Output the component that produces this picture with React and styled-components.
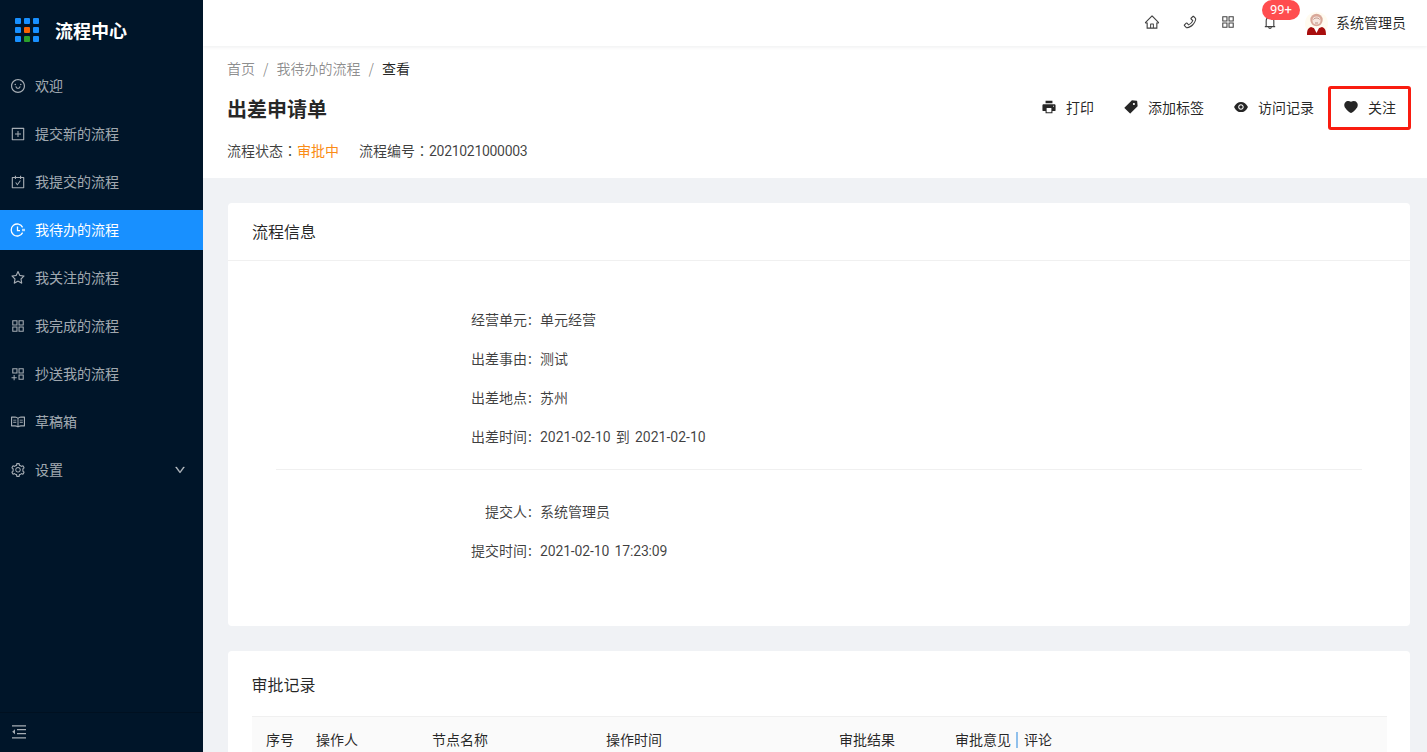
import React from "react";
import styled, { createGlobalStyle } from "styled-components";
import {
  AiOutlineSmile, AiOutlinePlusSquare, AiOutlineCarryOut, AiOutlineStar,
  AiOutlineAppstore, AiOutlineAppstoreAdd, AiOutlineRead, AiOutlineSetting, AiOutlineDown,
  AiOutlineHome, AiOutlinePhone, AiOutlineBell, AiFillPrinter, AiFillTag, AiFillEye, AiFillHeart,
} from "react-icons/ai";

const Global = createGlobalStyle`
  html, body { margin: 0; padding: 0; height: 100%; overflow: hidden; }
  body { font-family: "Noto Sans CJK SC", Roboto, sans-serif; font-size: 14px; color: rgba(0,0,0,.85); }
  * { box-sizing: border-box; }
`;

const Shell = styled.div`display: flex; width: 1427px; height: 752px; overflow: hidden; background: #f0f2f5;`;
const Sider = styled.aside`width: 203px; flex: none; background: #001529; display: flex; flex-direction: column;`;
const Brand = styled.div`height: 60px; display: flex; align-items: center; padding-left: 15px; gap: 16px;`;
const BrandName = styled.span`font-size: 18px; font-weight: 700; color: #fff; line-height: 24px; padding-bottom: 1px;`;
const LogoGrid = styled.div`display: grid; grid-template-columns: repeat(3, 6px); grid-auto-rows: 6px; gap: 3px;`;
const LogoDot = styled.i`display: block; border-radius: 1px; background: ${p => p.$c};`;
const Menu = styled.nav`flex: 1; padding-top: 6px; display: flex; flex-direction: column; gap: 8px;`;
const MenuItem = styled.div`
  height: 40px; display: flex; align-items: center; padding: 0 17px 0 10px; gap: 9px;
  color: ${p => (p.$active ? "#fff" : "rgba(255,255,255,.65)")};
  background: ${p => (p.$active ? "#1890ff" : "transparent")};
  svg { width: 16px; height: 16px; flex: none; }
`;
const MenuLabel = styled.span`flex: 1; line-height: 22px; padding-bottom: 2px;`;
const Chevron = styled.span`display: flex; svg { width: 12px; height: 12px; stroke: currentColor; stroke-width: 40px; }`;
const Collapse = styled.div`
  height: 40px; border-top: 1px solid rgba(0,0,0,.2); display: flex; align-items: center; padding: 0 0 2px 12px;
  color: rgba(255,255,255,.65);
`;
const CollapseIcon = styled.svg`width: 14px; height: 14px; display: block;`;

const Main = styled.div`flex: 1; min-width: 0; display: flex; flex-direction: column; overflow: hidden;`;
const Topbar = styled.header`
  height: 46px; flex: none; background: #fff; box-shadow: 0 1px 4px rgba(0,21,41,.08); display: flex;
  align-items: center; justify-content: flex-end; padding: 0 21px 2px 0; position: relative; z-index: 1;
`;
const TopIcon = styled.span`
  display: flex; width: 16px; justify-content: center; margin-right: ${p => p.$mr ?? 22}px; margin-left: ${p => p.$ml || 0}px;
  color: rgba(0,0,0,.75); position: relative;
  svg { width: 16px; height: 16px; }
`;
const Badge = styled.span`
  position: absolute; left: 0; top: -14px; height: 20px; min-width: 38px; border-radius: 10px; background: #ff4d4f;
  color: #fff; font-size: 13px; line-height: 20px; text-align: center; font-family: Roboto, sans-serif;
`;
const UserName = styled.span`margin-left: 8px; line-height: 22px;`;
const Avatar = styled.svg`width: 23px; height: 23px; flex: none; margin: 2px 0 0 6px;`;

const PageHead = styled.section`background: #fff; height: 132px; flex: none; padding: 11px 16px 0 24px;`;
const Crumbs = styled.div`display: flex; gap: 8px; line-height: 22px; color: rgba(0,0,0,.45);`;
const CrumbNow = styled.span`color: rgba(0,0,0,.85);`;
const TitleRow = styled.div`display: flex; align-items: center; justify-content: space-between; height: 44px; margin-top: 8px;`;
const Title = styled.h1`margin: 0; font-size: 20px; font-weight: 700; line-height: 28px;`;
const Actions = styled.div`display: flex; align-items: center; gap: 30px; padding: 0 15px 4px 0;`;
const Action = styled.div`
  display: flex; align-items: center; gap: 9px; position: relative; line-height: 22px;
  svg { width: 16px; height: 16px; margin-left: -1px; color: rgba(0,0,0,.85); }
`;
const Highlight = styled.span`
  position: absolute; left: -16px; right: -15px; top: -10px; bottom: -12px; border: 3px solid #f91c10; border-radius: 3px;
`;
const Meta = styled.div`display: flex; gap: 20px; margin-top: 8px; line-height: 22px; color: rgba(0,0,0,.75);`;
const Orange = styled.span`color: #fa8c16;`;
const WideColon = styled.span`font-family: "Noto Sans CJK TC", sans-serif;`;
const Num = styled.span`font-family: Roboto, sans-serif; letter-spacing: ${p => p.$ls || "-.3px"};`;

const Content = styled.div`flex: 1; padding: 25px 17px 0 25px; display: flex; flex-direction: column; gap: 25px;`;
const Card = styled.section`background: #fff; border-radius: 4px; flex: none;`;
const CardHead = styled.div`
  height: 58px; padding: ${p => (p.$plain ? "10px 24px 2px 23.5px" : "0 24px 2px")}; display: flex; align-items: center;
  font-size: 16px; color: rgba(0,0,0,.85); border-bottom: 1px solid ${p => (p.$plain ? "transparent" : "#f0f0f0")};
`;
const CardBody = styled.div`padding: 47px 24px 0; height: 365px;`;
const FormGroup = styled.div`display: flex; flex-direction: column; gap: 17px;`;
const Row = styled.div`display: grid; grid-template-columns: 288px 1fr; line-height: 22px;`;
const Label = styled.span`text-align: right; color: rgba(0,0,0,.75);`;
const Colon = styled.span`margin: 0 8px 0 1px;`;
const Value = styled.span`color: rgba(0,0,0,.75); word-spacing: 2px;`;
const Divider = styled.hr`border: 0; border-top: 1px solid #f0f0f0; margin: 21px 24px 30px;`;
const TableHead = styled.div`
  margin: 7px 23px 0 24px; height: 60px; background: #fafafa; border-top: 1px solid #f0f0f0;
  display: grid; grid-template-columns: 50px 116px 174px 233px 116px 1fr; align-items: start; padding-top: 11px;
`;
const Th = styled.span`padding: 0 0 0 14px; line-height: 22px; color: rgba(0,0,0,.85); white-space: nowrap;`;
const ThSep = styled.i`display: inline-block; width: 2px; height: 16px; background: #90c0ec; margin: 0 6px 0 5px; vertical-align: -3px;`;

const ClockIcon = () => (
  <svg viewBox="0 0 16 16" fill="none" stroke="currentColor" strokeWidth="1.3">
    <path d="M12.6 5.4A6 6 0 1 0 12.6 10.6" />
    <path d="M7.5 4.6V8.6H10" />
    <path d="M12 8h3" opacity=".7" strokeWidth="2.4" />
  </svg>
);

const menu = [
  [AiOutlineSmile, "欢迎"], [AiOutlinePlusSquare, "提交新的流程"], [AiOutlineCarryOut, "我提交的流程"],
  [ClockIcon, "我待办的流程", true], [AiOutlineStar, "我关注的流程"], [AiOutlineAppstore, "我完成的流程"],
  [AiOutlineAppstoreAdd, "抄送我的流程"], [AiOutlineRead, "草稿箱"], [AiOutlineSetting, "设置"],
];
const dots = ["#1890ff","#1890ff","#1890ff","#1890ff","#fa6400","#1890ff","#1890ff","#2ba02b","#1890ff"];

function Info({ k, children }) {
  return <Row><Label>{k}<Colon>:</Colon></Label><Value>{children}</Value></Row>;
}

export default function App() {
  return (
    <Shell>
      <Global />
      <Sider>
        <Brand>
          <LogoGrid>{dots.map((c, i) => <LogoDot key={i} $c={c} />)}</LogoGrid>
          <BrandName>流程中心</BrandName>
        </Brand>
        <Menu>
          {menu.map(([I, t, a]) => (
            <MenuItem key={t} $active={a}>
              <I /><MenuLabel>{t}</MenuLabel>
              {t === "设置" && <Chevron><AiOutlineDown /></Chevron>}
            </MenuItem>
          ))}
        </Menu>
        <Collapse>
          <CollapseIcon viewBox="0 0 14 14" fill="none" stroke="currentColor" strokeWidth="1.2">
            <path d="M0 .8h14M5 4.6h9M5 8.6h9M0 12.8h14" />
            <path d="M3 4.2v5L.2 6.7z" fill="currentColor" stroke="none" />
          </CollapseIcon>
        </Collapse>
      </Sider>
      <Main>
        <Topbar>
          <TopIcon><AiOutlineHome /></TopIcon>
          <TopIcon><AiOutlinePhone /></TopIcon>
          <TopIcon><AiOutlineAppstore /></TopIcon>
          <TopIcon $ml={4} $mr={21}><AiOutlineBell /><Badge>99+</Badge></TopIcon>
          <Avatar viewBox="0 0 23 23">
            <circle cx="11.5" cy="11.5" r="11.5" fill="#fffbf0" />
            <path d="M2 23c0-5 1-7 4-8l5.5 2 5.5-2c3 1 4 3 4 8z" fill="#a80d0d" />
            <path d="M9 16l2.5 5 2.5-5z" fill="#fff" />
            <circle cx="11.5" cy="8" r="6.2" fill="#d9a899" />
            <circle cx="11.5" cy="8.5" r="4" fill="#f7e7df" />
            <path d="M8.5 7.5c1-2 5-2 6 0M10 11h3" stroke="#a9786a" strokeWidth=".8" fill="none" />
          </Avatar>
          <UserName>系统管理员</UserName>
        </Topbar>
        <PageHead>
          <Crumbs>
            <span>首页</span><span>/</span><span>我待办的流程</span><span>/</span><CrumbNow>查看</CrumbNow>
          </Crumbs>
          <TitleRow>
            <Title>出差申请单</Title>
            <Actions>
              <Action><AiFillPrinter />打印</Action>
              <Action><AiFillTag />添加标签</Action>
              <Action><AiFillEye />访问记录</Action>
              <Action><AiFillHeart />关注<Highlight /></Action>
            </Actions>
          </TitleRow>
          <Meta>
            <span>流程状态<WideColon>{"\uFF1A"}</WideColon><Orange>审批中</Orange></span>
            <span>流程编号<WideColon>{"\uFF1A"}</WideColon><Num>2021021000003</Num></span>
          </Meta>
        </PageHead>
        <Content>
          <Card>
            <CardHead>流程信息</CardHead>
            <CardBody>
              <FormGroup>
                <Info k="经营单元">单元经营</Info>
                <Info k="出差事由">测试</Info>
                <Info k="出差地点">苏州</Info>
                <Info k="出差时间"><Num $ls="0">2021-02-10</Num> 到 <Num $ls="0">2021-02-10</Num></Info>
              </FormGroup>
              <Divider />
              <FormGroup>
                <Info k="提交人">系统管理员</Info>
                <Info k="提交时间"><Num $ls="-.15px">2021-02-10 17:23:09</Num></Info>
              </FormGroup>
            </CardBody>
          </Card>
          <Card>
            <CardHead $plain>审批记录</CardHead>
            <TableHead>
              <Th>序号</Th><Th>操作人</Th><Th>节点名称</Th><Th>操作时间</Th><Th>审批结果</Th>
              <Th>审批意见<ThSep />评论</Th>
            </TableHead>
          </Card>
        </Content>
      </Main>
    </Shell>
  );
}
